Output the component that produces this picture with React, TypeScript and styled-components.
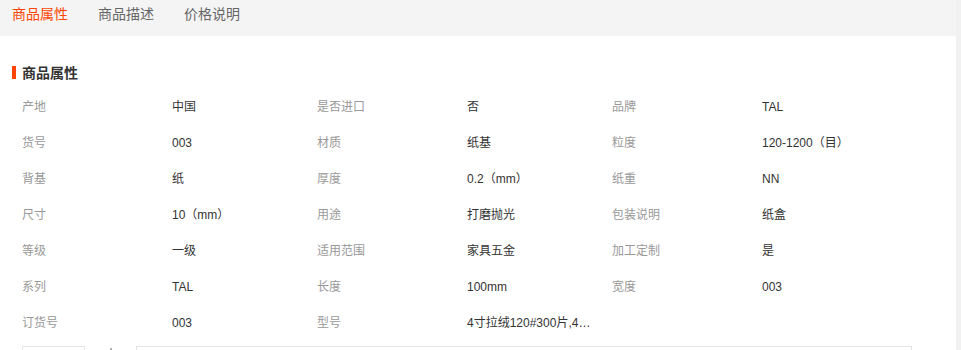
import React from "react";
import styled, { createGlobalStyle } from "styled-components";

const Global = createGlobalStyle`
  html, body { margin: 0; padding: 0; background: #fff; }
  body {
    font-family: "Liberation Sans", "Noto Sans CJK SC", sans-serif;
    -webkit-font-smoothing: antialiased;
  }
`;

const Frame = styled.div`
  display: flex;
  width: 961px;
  height: 350px;
  overflow: hidden;
`;

const Main = styled.div`
  width: 956px;
  flex: none;
`;

const Gutter = styled.div`
  flex: 1;
  background: #f1f1f1;
`;

const TabBar = styled.div`
  display: flex;
  height: 36px;
  background: #f4f4f4;
  padding-left: 12px;
  box-sizing: border-box;
`;

const Tab = styled.div<{ $active?: boolean }>`
  font-size: 14px;
  line-height: 28px;
  margin-right: 30px;
  color: ${(p) => (p.$active ? "#ff4400" : "#666")};
  cursor: pointer;
`;

const Section = styled.section`
  padding: 26px 0 0 0;
`;

const Heading = styled.h3`
  display: flex;
  align-items: center;
  margin: 0;
  padding-left: 12px;
  height: 20px;
  font-size: 14px;
  font-weight: bold;
  color: #333;

  &::before {
    content: "";
    width: 4px;
    height: 13px;
    background: #ff4400;
    margin-right: 6px;
  }
`;

const Grid = styled.div`
  display: grid;
  grid-template-columns: repeat(3, 150px 145px);
  margin: 7px 0 0 22px;
`;

const Label = styled.div`
  height: 36px;
  line-height: 36px;
  font-size: 12px;
  color: #999;
`;

const Value = styled.div`
  height: 36px;
  line-height: 36px;
  font-size: 12px;
  color: #333;
  max-width: 126px;
  white-space: nowrap;
  overflow: hidden;
  text-overflow: ellipsis;
`;

const Footer = styled.div`
  display: flex;
  align-items: flex-start;
  margin: 5px 0 0 22px;
`;

const Box = styled.div<{ $w: number }>`
  width: ${(p) => p.$w}px;
  height: 30px;
  border: 1px solid #e5e5e5;
  box-sizing: border-box;
`;

const Dot = styled.div`
  width: 2px;
  height: 2px;
  margin: 2px 24px 0 25px;
  background: #b0b0b0;
`;

const rows: [string, string][][] = [
  [["产地", "中国"], ["是否进口", "否"], ["品牌", "TAL"]],
  [["货号", "003"], ["材质", "纸基"], ["粒度", "120-1200（目）"]],
  [["背基", "纸"], ["厚度", "0.2（mm）"], ["纸重", "NN"]],
  [["尺寸", "10（mm）"], ["用途", "打磨抛光"], ["包装说明", "纸盒"]],
  [["等级", "一级"], ["适用范围", "家具五金"], ["加工定制", "是"]],
  [["系列", "TAL"], ["长度", "100mm"], ["宽度", "003"]],
  [["订货号", "003"], ["型号", "4寸拉绒120#300片,400#300片"], ["", ""]],
];

export default function App() {
  return (
    <>
      <Global />
      <Frame>
        <Main>
          <TabBar>
            <Tab $active>商品属性</Tab>
            <Tab>商品描述</Tab>
            <Tab>价格说明</Tab>
          </TabBar>
          <Section>
            <Heading>商品属性</Heading>
            <Grid>
              {rows.flatMap((row, i) =>
                row.flatMap(([k, v], j) => [
                  <Label key={`k${i}-${j}`}>{k}</Label>,
                  <Value key={`v${i}-${j}`}>{v}</Value>,
                ])
              )}
            </Grid>
            <Footer>
              <Box $w={63} />
              <Dot />
              <Box $w={776} />
            </Footer>
          </Section>
        </Main>
        <Gutter />
      </Frame>
    </>
  );
}
